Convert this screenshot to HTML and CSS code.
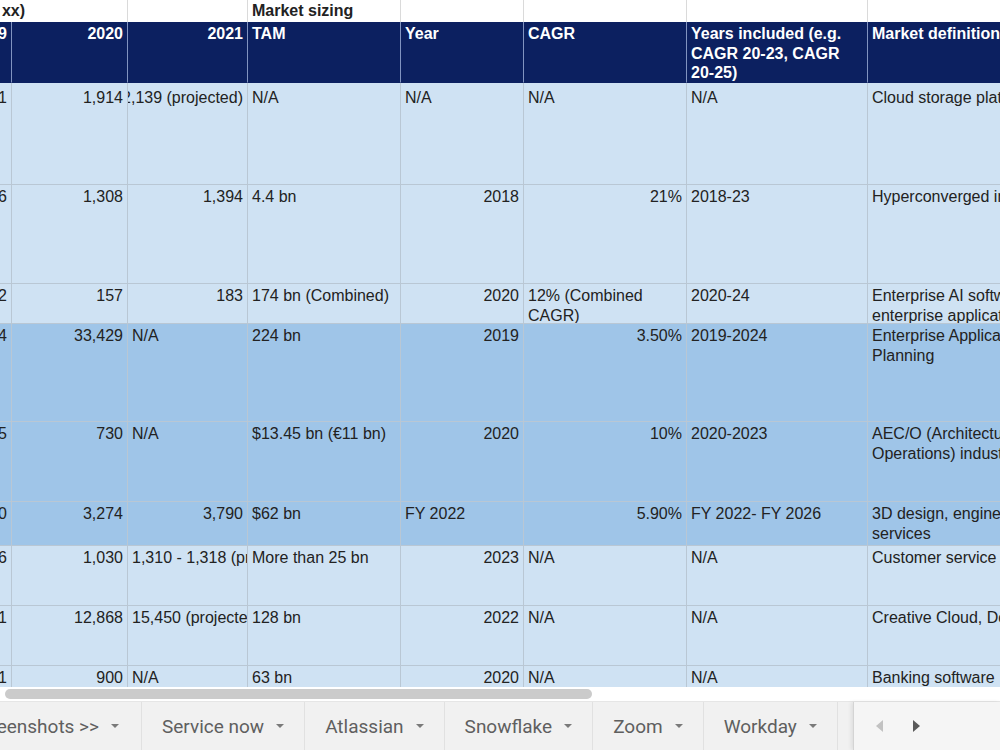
FILE: index.html
```html
<!DOCTYPE html>
<html lang="en">
<head>
<meta charset="utf-8">
<title>Market sizing</title>
<link rel="stylesheet" href="styles.css">
</head>
<body>
<main class="sheet">
  <div class="grid">
    <!-- group title row -->
    <div class="cell top span2"><div class="title-clip">(US$ mn, FY xx)</div></div>
    <div class="cell top"></div>
    <div class="cell top group">Market sizing</div>
    <div class="cell top"></div>
    <div class="cell top"></div>
    <div class="cell top"></div>
    <div class="cell top"></div>

    <!-- column headers -->
    <div class="cell head num">2019</div>
    <div class="cell head num">2020</div>
    <div class="cell head num">2021</div>
    <div class="cell head">TAM</div>
    <div class="cell head">Year</div>
    <div class="cell head">CAGR</div>
    <div class="cell head">Years included (e.g. CAGR 20-23, CAGR 20-25)</div>
    <div class="cell head clip">Market definition</div>

    <!-- row 1 -->
    <div class="cell r1 num">1,661</div>
    <div class="cell r1 num">1,914</div>
    <div class="cell r1 num">2,139 (projected)</div>
    <div class="cell r1">N/A</div>
    <div class="cell r1">N/A</div>
    <div class="cell r1">N/A</div>
    <div class="cell r1">N/A</div>
    <div class="cell r1 clip">Cloud storage platforms</div>

    <!-- row 2 -->
    <div class="cell num">1,226</div>
    <div class="cell num">1,308</div>
    <div class="cell num">1,394</div>
    <div class="cell">4.4 bn</div>
    <div class="cell num">2018</div>
    <div class="cell num">21%</div>
    <div class="cell">2018-23</div>
    <div class="cell clip">Hyperconverged infrastructure</div>

    <!-- row 3 -->
    <div class="cell num">142</div>
    <div class="cell num">157</div>
    <div class="cell num">183</div>
    <div class="cell">174 bn (Combined)</div>
    <div class="cell num">2020</div>
    <div class="cell">12% (Combined CAGR)</div>
    <div class="cell">2020-24</div>
    <div class="cell clip">Enterprise AI software and<br>enterprise applications</div>

    <!-- row 4 -->
    <div class="cell dark num">31,484</div>
    <div class="cell dark num">33,429</div>
    <div class="cell dark">N/A</div>
    <div class="cell dark">224 bn</div>
    <div class="cell dark num">2019</div>
    <div class="cell dark num">3.50%</div>
    <div class="cell dark">2019-2024</div>
    <div class="cell dark clip">Enterprise Application Resource<br>Planning</div>

    <!-- row 5 -->
    <div class="cell dark num">615</div>
    <div class="cell dark num">730</div>
    <div class="cell dark">N/A</div>
    <div class="cell dark">$13.45 bn (€11 bn)</div>
    <div class="cell dark num">2020</div>
    <div class="cell dark num">10%</div>
    <div class="cell dark">2020-2023</div>
    <div class="cell dark clip">AEC/O (Architecture, Engineering, Construction and<br>Operations) industry</div>

    <!-- row 6 -->
    <div class="cell dark num">2,880</div>
    <div class="cell dark num">3,274</div>
    <div class="cell dark num">3,790</div>
    <div class="cell dark">$62 bn</div>
    <div class="cell dark">FY 2022</div>
    <div class="cell dark num">5.90%</div>
    <div class="cell dark">FY 2022- FY 2026</div>
    <div class="cell dark clip">3D design, engineering and simulation software and<br>services</div>

    <!-- row 7 -->
    <div class="cell num">736</div>
    <div class="cell num">1,030</div>
    <div class="cell clip">1,310 - 1,318 (projected)</div>
    <div class="cell">More than 25 bn</div>
    <div class="cell num">2023</div>
    <div class="cell">N/A</div>
    <div class="cell">N/A</div>
    <div class="cell clip">Customer service software</div>

    <!-- row 8 -->
    <div class="cell num">11,171</div>
    <div class="cell num">12,868</div>
    <div class="cell clip">15,450 (projected)</div>
    <div class="cell">128 bn</div>
    <div class="cell num">2022</div>
    <div class="cell">N/A</div>
    <div class="cell">N/A</div>
    <div class="cell clip">Creative Cloud, Document Cloud</div>

    <!-- row 9 -->
    <div class="cell num">811</div>
    <div class="cell num">900</div>
    <div class="cell">N/A</div>
    <div class="cell">63 bn</div>
    <div class="cell num">2020</div>
    <div class="cell">N/A</div>
    <div class="cell">N/A</div>
    <div class="cell clip">Banking software</div>
  </div>
</main>

<div class="hscroll"><div class="thumb"></div></div>

<nav class="tabs">
  <div class="tab first"><span class="label">Screenshots &gt;&gt;</span><span class="caret"></span></div>
  <div class="tab"><span class="label">Service now</span><span class="caret"></span></div>
  <div class="tab"><span class="label">Atlassian</span><span class="caret"></span></div>
  <div class="tab"><span class="label">Snowflake</span><span class="caret"></span></div>
  <div class="tab"><span class="label">Zoom</span><span class="caret"></span></div>
  <div class="tab"><span class="label">Workday</span><span class="caret"></span></div>
  <div class="tab-gap"></div>
  <div class="tab-nav">
    <svg class="arrow" width="8" height="12" viewBox="0 0 8 12"><path d="M7 0 L7 12 L0 6 Z" fill="#c2c2c2"/></svg>
    <svg class="arrow" width="8" height="12" viewBox="0 0 8 12"><path d="M0 0 L0 12 L7 6 Z" fill="#5a5a5a"/></svg>
  </div>
</nav>
</body>
</html>
```

FILE: styles.css
```css
* { box-sizing: border-box; }

html, body {
  margin: 0;
  padding: 0;
  width: 1000px;
  height: 750px;
  overflow: hidden;
  background: #ffffff;
}

.sheet {
  width: 1000px;
  height: 687px;
  overflow: hidden;
}

.grid {
  display: grid;
  grid-template-columns: 12px 116px 120px 153px 123px 163px 181px 300px;
  grid-template-rows: 22px 61px 102px 99px 40px 98px 80px 44px 60px 60px 40px;
  font-family: "Liberation Sans", Arial, sans-serif;
  font-size: 16px;
  line-height: 19.5px;
  color: #222222;
}

.cell {
  background: #cfe2f3;
  border-right: 1px solid #b9c7d4;
  border-bottom: 1px solid #b9c7d4;
  padding: 2px 4px 0 4px;
  overflow: hidden;
}

.cell.dark { background: #9fc5e8; }

.cell.r1 { padding-top: 5px; }

.num {
  display: flex;
  justify-content: flex-end;
  white-space: nowrap;
}

.clip { white-space: nowrap; }

/* group title row */
.cell.top {
  background: #ffffff;
  border-right: 1px solid #dadada;
  border-bottom: none;
  padding-top: 1px;
  font-weight: bold;
}

.span2 { grid-column: span 2; padding-left: 0; }

.title-clip {
  width: 25px;
  display: flex;
  justify-content: flex-end;
  white-space: nowrap;
}

/* header row */
.cell.head {
  background: #0c2060;
  color: #ffffff;
  font-weight: bold;
  border-right: 1px solid #8193c0;
  border-bottom: 1px solid #0c2060;
}

/* horizontal scrollbar strip */
.hscroll {
  height: 14px;
  padding: 2px 0 0 5px;
  background: #ffffff;
}

.thumb {
  width: 587px;
  height: 10px;
  border-radius: 5px;
  background: #cbcbcb;
}

/* sheet tabs */
.tabs {
  display: flex;
  height: 49px;
  background: #f1f1f1;
  border-top: 1px solid #e6e6e6;
  font-family: Roboto, "Liberation Sans", sans-serif;
  font-size: 19px;
  font-weight: 400;
  color: #5f5f5f;
}

.tab {
  display: flex;
  align-items: center;
  gap: 12px;
  padding: 0 20px;
  border-right: 1px solid #e1e1e1;
  white-space: nowrap;
  flex-shrink: 0;
}

.tab.first {
  width: 142px;
  padding-left: 0;
  padding-right: 22px;
  justify-content: flex-end;
  overflow: hidden;
}

.label { flex-shrink: 0; }

.caret {
  flex-shrink: 0;
  width: 0;
  height: 0;
  border-left: 4px solid transparent;
  border-right: 4px solid transparent;
  border-top: 4px solid #7a7a7a;
}

.tab-gap {
  width: 15px;
  flex-shrink: 0;
}

.tab-nav {
  flex: 1;
  display: flex;
  align-items: center;
  gap: 29px;
  padding-left: 22px;
  background: #f5f5f5;
  border-left: 1px solid #d4d4d4;
  box-shadow: -2px 0 4px rgba(0, 0, 0, 0.08);
}

.arrow { display: block; }
```
